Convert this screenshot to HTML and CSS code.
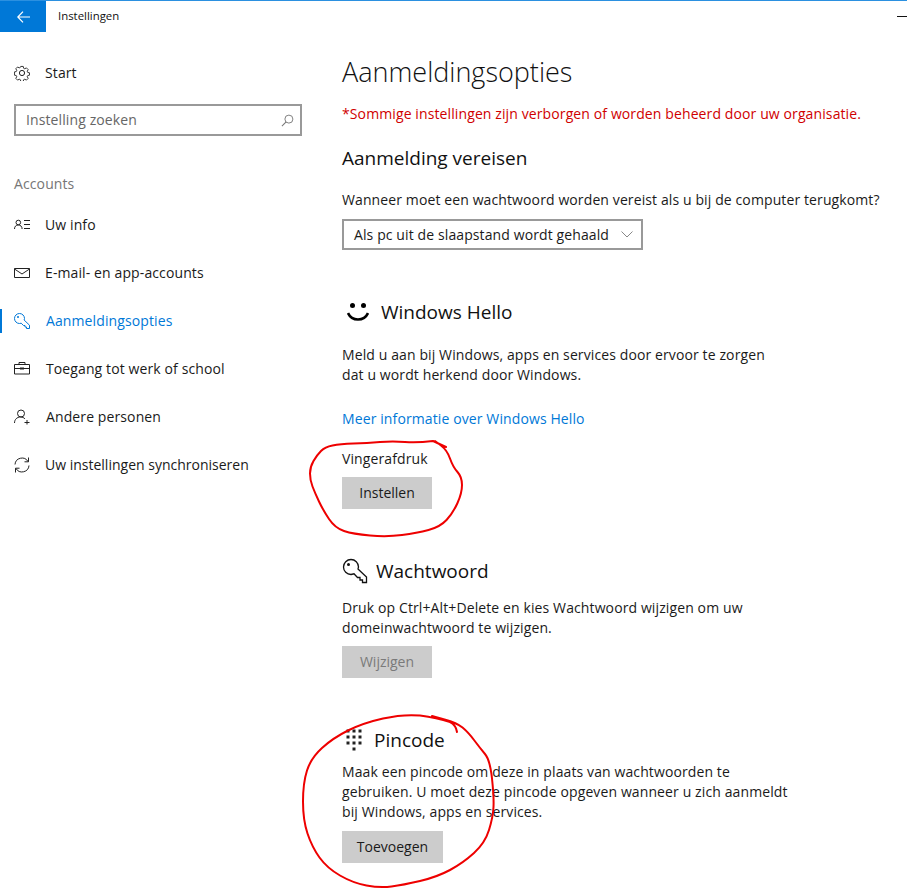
FILE: index.html
```html
<!DOCTYPE html>
<html lang="nl">
<head>
    <meta charset="UTF-8">
    <title>Instellingen</title>
    <link rel="stylesheet" href="styles.css">
</head>
<body>

    <!-- Title bar -->
    <header class="titlebar">
        <button class="back">
            <svg width="13" height="12" viewBox="0 0 13 12"><path d="M13 6H1M6 .7.8 6 6 11.300" fill="none" stroke="#fff" stroke-width="1.200"/></svg>
        </button>
        <span class="app-title">Instellingen</span>
        <span class="minimize"></span>
    </header>

    <div class="content">
        <!-- Sidebar -->
        <nav class="sidebar">
            <a class="nav-item start">
                <svg class="nav-icon" width="16" height="16" viewBox="0 0 16 16"><path d="M6.6.7h2.800l.4 2 1.300.6 1.800-1 2 2-1.100 1.700.6 1.400 2 .4v2.600l-2 .4-.6 1.400 1.100 1.700-2 2-1.800-1-1.300.6-.4 1.900H6.600l-.4-1.900-1.300-.6-1.800 1-2-2 1.100-1.700-.6-1.400-2-.4V6.800l2-.4.6-1.400-1.100-1.700 2-2 1.800 1 1.300-.6z" transform="translate(.8 .8) scale(.9)" fill="none" stroke="#222"/><circle cx="8" cy="8" r="2.600" fill="none" stroke="#222"/></svg>
                <span>Start</span>
            </a>
            <div class="search">
                <span>Instelling zoeken</span>
                <svg width="13" height="13" viewBox="0 0 14 14"><circle cx="8.500" cy="5.500" r="4.300" fill="none" stroke="#777"/><path d="M5.500 8.500 1 13" stroke="#777" stroke-width="1.100"/></svg>
            </div>
            <div class="nav-group">Accounts</div>
            <a class="nav-item">
                <svg class="nav-icon" width="16" height="16" viewBox="0 0 16 16"><circle cx="4.300" cy="5.500" r="2.300" fill="none" stroke="#222"/><path d="M.5 12c0-2.500 1.500-4 3.800-4s3.800 1.500 3.800 4M10 3.500h6M10 7.500h6M10 11.500h6" fill="none" stroke="#222"/></svg>
                <span>Uw info</span>
            </a>
            <a class="nav-item">
                <svg class="nav-icon" width="16" height="16" viewBox="0 0 16 16"><path d="M.5 3.500h15v9H.5zM.5 4 8 9l7.500-5" fill="none" stroke="#222"/></svg>
                <span>E-mail- en app-accounts</span>
            </a>
            <a class="nav-item active shifted">
                <svg class="nav-icon" width="16" height="16" viewBox="0 0 16 16"><path d="M5.500.5a5 5 0 0 1 5 5l-.4 1.500 5.400 5.200V15.500h-3V14h-1.500v-1.500H9.500L7.200 10.200 5.500 10.500a5 5 0 0 1 0-10z" fill="none" stroke="#0078d7"/><circle cx="4" cy="4" r="1" fill="#0078d7"/></svg>
                <span>Aanmeldingsopties</span>
            </a>
            <a class="nav-item shifted">
                <svg class="nav-icon" width="16" height="16" viewBox="0 0 16 16"><path d="M.5 3.500h15v9.500H.5zM5 3.500V1.500h6v2M.5 7.500h15" fill="none" stroke="#222"/><rect x="6" y="6.500" width="4" height="2" fill="#222"/></svg>
                <span>Toegang tot werk of school</span>
            </a>
            <a class="nav-item shifted">
                <svg class="nav-icon" width="16" height="16" viewBox="0 0 16 16"><circle cx="7" cy="4.500" r="3.500" fill="none" stroke="#222"/><path d="M.5 14c0-3.500 2.500-6 6-6 2 0 3.500.7 4.500 2M13 11v4.500M10.500 13.500h5" fill="none" stroke="#222"/></svg>
                <span>Andere personen</span>
            </a>
            <a class="nav-item sync">
                <svg class="nav-icon" width="16" height="16" viewBox="0 0 16 16"><path d="M1 7.500A7 7 0 0 1 14 4.500M15 8.500A7 7 0 0 1 2 11.500M14.500.5v4.300h-4M1.500 15.500v-4.300h4" fill="none" stroke="#222"/></svg>
                <span>Uw instellingen synchroniseren</span>
            </a>
        </nav>

        <!-- Main -->
        <main class="main">
            <h1>Aanmeldingsopties</h1>
            <p class="notice">*Sommige instellingen zijn verborgen of worden beheerd door uw organisatie.</p>

            <h2 class="require-title">Aanmelding vereisen</h2>
            <p class="question">Wanneer moet een wachtwoord worden vereist als u bij de computer terugkomt?</p>
            <div class="select">
                <span>Als pc uit de slaapstand wordt gehaald</span>
                <svg width="12" height="7" viewBox="0 0 12 7"><path d="M.5.5 6 6l5.500-5.500" fill="none" stroke="#888"/></svg>
            </div>

            <div class="section-head hello-head">
                <svg width="22" height="20" viewBox="0 0 22 20"><circle cx="5.500" cy="3.500" r="2.500" fill="#000"/><circle cx="16.500" cy="3.500" r="2.500" fill="#000"/><path d="M1 11c2 4.500 5 6.500 10 6.500s8-2 10-6.500" fill="none" stroke="#000" stroke-width="2.600"/></svg>
                <h2>Windows Hello</h2>
            </div>
            <p class="text hello-text">Meld u aan bij Windows, apps en services door ervoor te zorgen<br>dat u wordt herkend door Windows.</p>
            <a class="link">Meer informatie over Windows Hello</a>
            <p class="finger">Vingerafdruk</p>
            <button class="btn">Instellen</button>

            <div class="section-head password-head">
                <svg width="26" height="26" viewBox="0 0 26 26"><path d="M9 1.500a7.500 7.500 0 0 1 7.500 7.500l-.5 2 8.500 8V24.500h-4V22h-2.500v-2.500H15.500L12 15.800 9 16.500a7.500 7.500 0 0 1 0-15z" fill="none" stroke="#111" stroke-width="1.300"/><circle cx="6.500" cy="6.500" r="1.500" fill="#111"/></svg>
                <h2>Wachtwoord</h2>
            </div>
            <p class="text password-text">Druk op Ctrl+Alt+Delete en kies Wachtwoord wijzigen om uw<br>domeinwachtwoord te wijzigen.</p>
            <button class="btn disabled">Wijzigen</button>

            <div class="section-head pin-head">
                <svg class="pin-icon" width="16" height="22" viewBox="0 0 16 22"><g fill="#222"><rect x=".5" y=".5" width="3" height="3"/><rect x="6.500" y=".5" width="3" height="3"/><rect x="12.500" y=".5" width="3" height="3"/><rect x=".5" y="6.500" width="3" height="3"/><rect x="6.500" y="6.500" width="3" height="3"/><rect x="12.500" y="6.500" width="3" height="3"/><rect x=".5" y="12.500" width="3" height="3"/><rect x="6.500" y="12.500" width="3" height="3"/><rect x="12.500" y="12.500" width="3" height="3"/><rect x="6.500" y="18.500" width="3" height="3"/></g></svg>
                <h2>Pincode</h2>
            </div>
            <p class="text pin-text">Maak een pincode om deze in plaats van wachtwoorden te<br>gebruiken. U moet deze pincode opgeven wanneer u zich aanmeldt<br>bij Windows, apps en services.</p>
            <button class="btn wide">Toevoegen</button>
        </main>
    </div>

    <!-- Red pen marks on top of the screenshot -->
    <svg class="pen" width="907" height="894" viewBox="0 0 907 894">
        <path d="M446 447 433 441Q417 443 405 442Q393 441 380 442Q367 443 353.500 443.500Q340 444 332.500 445.500Q325 447 321 451Q317 455 313.500 461Q310 467 310 473.500Q310 480 312.500 486.500Q315 493 319 501.500Q323 510 329 519Q335 528 344 531Q353 534 370 535.500Q387 537 402 535Q417 533 428.500 530Q440 527 446.500 520Q453 513 457.500 503Q462 493 462 485Q462 477 457.500 472Q453 467 450 458.500Q447 450 441 445.500L435 441"/>
        <path d="M457 732Q456 725 450 722Q437 718 420 715.500Q403 714 383 718.500Q363 723 348 730.500Q333 738 322 748Q311 758 307 770.500Q303 783 303 801.500Q303 820 307.500 833.500Q312 847 319.500 857.500Q327 868 340 875.500Q353 883 366.500 885.500Q380 888 391.500 886.500Q403 885 420 881Q437 877 450 870Q463 863 474 853Q485 843 489 830Q493 817 493.500 807Q494 797 492 778.500Q490 760 485 754Q480 748 474 740Q468 732 462.500 727.500Q457 723 444.500 719.500L432 716"/>
    </svg>

</body>
</html>
```

FILE: styles.css
```css
body {
    margin: 0;
    width: 907px;
    height: 894px;
    overflow: hidden;
    background-color: #fff;
    color: #1a1a1a;
    font-family: 'Open Sans', 'Noto Sans', sans-serif;
    font-size: 14px;
    line-height: 20px;
    letter-spacing: 0.11px;
    position: relative;
}

/* Title bar */
.titlebar {
    display: flex;
    align-items: center;
    height: 31px;
    border-top: 1px solid #2b90e0;
}

.back {
    display: flex;
    align-items: center;
    justify-content: center;
    width: 46px;
    height: 31px;
    padding: 0;
    border: none;
    background-color: #0078d7;
}

.app-title {
    margin: -1px 0 0 12px;
    font-size: 11.4px;
    letter-spacing: 0;
    color: #111;
}

.minimize {
    width: 10px;
    height: 1px;
    margin-left: auto;
    background-color: #111;
}

.content {
    display: flex;
}

/* Sidebar */
.sidebar {
    width: 342px;
    flex-shrink: 0;
    padding-top: 17px;
    box-sizing: border-box;
}

.nav-item {
    display: flex;
    align-items: center;
    height: 48px;
    padding-left: 14px;
    color: #1a1a1a;
    box-sizing: border-box;
}

.nav-item span {
    margin-left: 15px;
}

.nav-item.shifted span {
    margin-left: 16px;
}

.nav-item.sync span {
    letter-spacing: 0;
}

.nav-item.active {
    color: #0078d7;
    position: relative;
}

.nav-item.active::before {
    content: "";
    position: absolute;
    left: 0;
    top: 12px;
    width: 2px;
    height: 24px;
    background-color: #0078d7;
}

.nav-icon {
    flex-shrink: 0;
}

.search {
    display: flex;
    align-items: center;
    justify-content: space-between;
    width: 288px;
    height: 32px;
    margin: 7px 0 0 14px;
    padding: 0 6px 0 10px;
    border: 2px solid #999;
    box-sizing: border-box;
    color: #666;
}

.nav-group {
    height: 27px;
    margin: 38px 0 0 14px;
    color: #767676;
}

/* Main */
.main {
    flex: 1;
}

h1 {
    margin: 21px 0 0;
    font-size: 27px;
    font-weight: 300;
    letter-spacing: 0;
    line-height: 38px;
    color: #111;
}

h2 {
    margin: 0;
    font-size: 19px;
    font-weight: 400;
    letter-spacing: 0;
    line-height: 28px;
    color: #111;
}

p {
    margin: 0;
}

.notice {
    margin-top: 13px;
    color: #d00000;
}

.require-title {
    margin-top: 20px;
}

.question {
    margin-top: 18px;
}

.select {
    display: flex;
    align-items: center;
    justify-content: space-between;
    width: 301px;
    height: 31px;
    margin-top: 9px;
    padding: 0 8px 0 10px;
    border: 2px solid #999;
    box-sizing: border-box;
}

.section-head {
    display: flex;
    align-items: center;
}

.hello-head {
    margin-top: 48px;
    padding-left: 5px;
    gap: 12px;
    height: 28px;
}

.hello-text {
    margin-top: 19px;
}

.link {
    display: block;
    margin-top: 24px;
    color: #0078d7;
}

.finger {
    margin-top: 20px;
}

.btn {
    display: block;
    width: 90px;
    height: 32px;
    margin-top: 8px;
    padding: 0;
    border: none;
    background-color: #ccc;
    color: #1a1a1a;
    font: inherit;
    letter-spacing: 0;
}

.btn.disabled {
    color: #7a7a7a;
}

.btn.wide {
    width: 101px;
    margin-top: 9px;
}

.password-head {
    margin-top: 48px;
    height: 28px;
    gap: 8px;
}

.password-text {
    margin-top: 13px;
}

.pin-head {
    margin-top: 48px;
    padding-left: 4px;
    height: 28px;
    gap: 12px;
}

.pin-text {
    margin-top: 8px;
}

/* Annotation */
.pen {
    position: absolute;
    left: 0;
    top: 0;
    pointer-events: none;
}

.pen path {
    fill: none;
    stroke: #ee0000;
    stroke-width: 2;
    stroke-linejoin: round;
    stroke-linecap: round;
}
```
